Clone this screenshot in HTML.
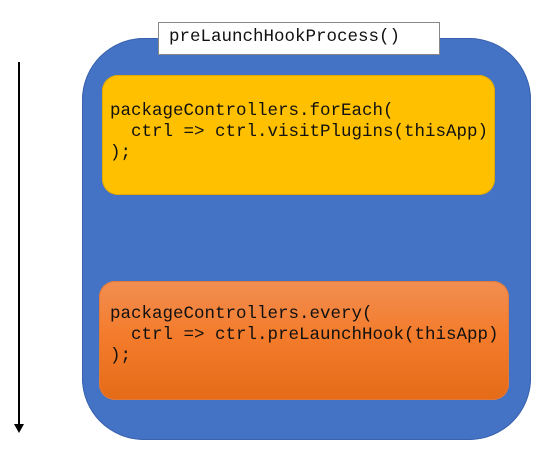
<!DOCTYPE html>
<html><head><style>
body{margin:0;width:555px;height:474px;background:#fff;position:relative;overflow:hidden;font-family:"Liberation Mono",monospace;}
.a{position:absolute}
pre{margin:0;font-family:"Liberation Mono",monospace;font-size:17.5px;line-height:21px;color:#111;}
</style></head><body>
<div class="a" style="left:18px;top:62px;width:1.5px;height:364px;background:#000"></div>
<div class="a" style="left:14px;top:424px;width:0;height:0;border-left:5px solid transparent;border-right:5px solid transparent;border-top:9px solid #000"></div>
<div class="a" style="left:82px;top:38px;width:449px;height:402px;background:#4472c4;border-radius:62px;box-shadow:inset 0 0 0 1px #3b63ad"></div>
<div class="a" style="left:158px;top:22px;width:280px;height:31px;background:#fff;border:1px solid #888"></div>
<pre class="a" style="left:169px;top:27px">preLaunchHookProcess()</pre>
<div class="a" style="left:102px;top:75px;width:393px;height:120px;background:#ffc000;border-radius:16px;box-shadow:inset 0 0 0 1px #e0a800"></div>
<pre class="a" style="left:110px;top:101px">packageControllers.forEach(
  ctrl =&gt; ctrl.visitPlugins(thisApp)
);</pre>
<div class="a" style="left:99px;top:281px;width:410px;height:119px;background:linear-gradient(#f28e52,#f37c2c 45%,#e56b17);border-radius:16px;box-shadow:inset 0 0 0 1px #e07a3a"></div>
<pre class="a" style="left:110px;top:304px">packageControllers.every(
  ctrl =&gt; ctrl.preLaunchHook(thisApp)
);</pre>
</body></html>
